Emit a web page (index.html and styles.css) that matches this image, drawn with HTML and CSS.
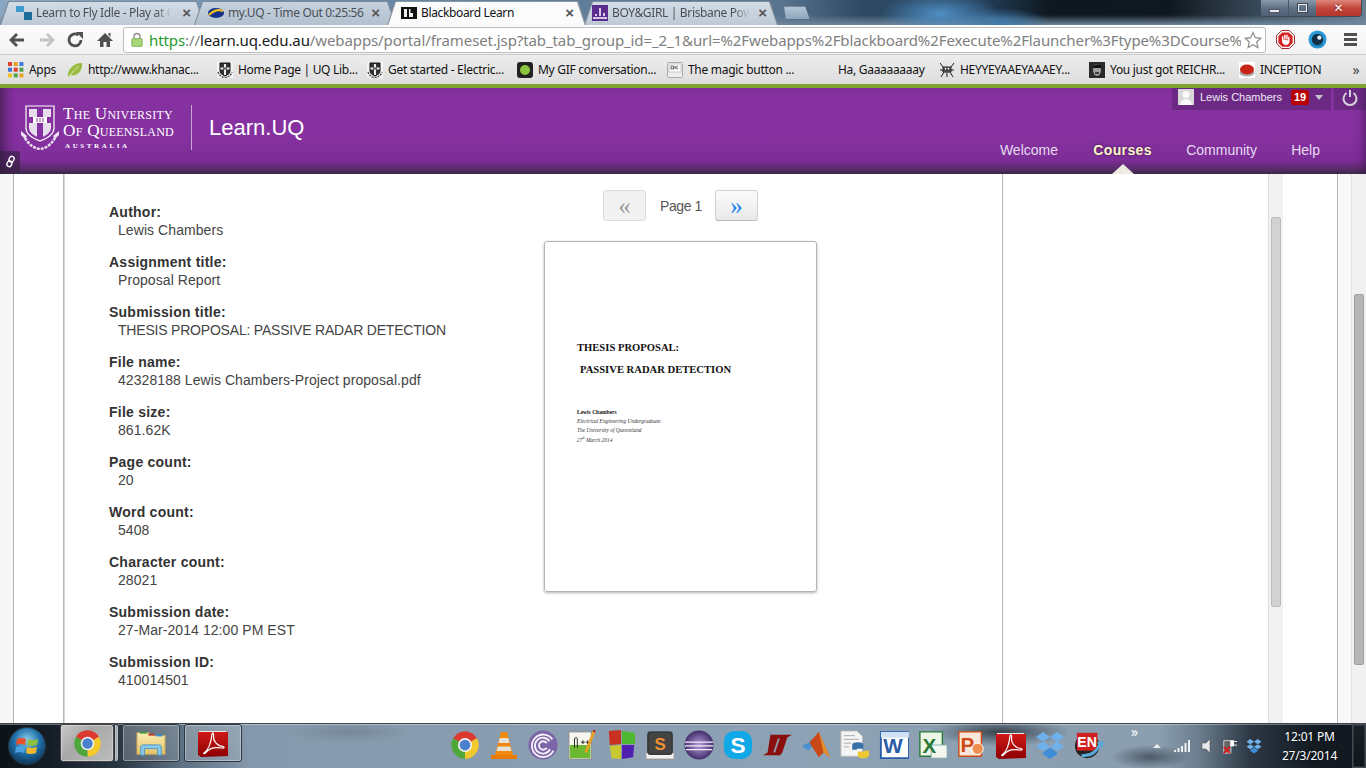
FILE: index.html
```html
<!DOCTYPE html>
<html lang="en">
<head>
<meta charset="utf-8">
<title>Blackboard Learn</title>
<link rel="stylesheet" href="styles.css">
</head>
<body>
<svg class="defs" width="0" height="0" aria-hidden="true">
  <defs>
    <linearGradient id="acro" x1="0" y1="0" x2="0" y2="1"><stop offset="0" stop-color="#d01818"/><stop offset="1" stop-color="#8c0000"/></linearGradient>
    <radialGradient id="orb" cx=".5" cy=".35" r=".7"><stop offset="0" stop-color="#8fd0f0"/><stop offset=".5" stop-color="#1f6fa8"/><stop offset="1" stop-color="#0a2c4c"/></radialGradient>
    <radialGradient id="eclipse" cx=".5" cy=".5" r=".6"><stop offset="0" stop-color="#b79bd8"/><stop offset="1" stop-color="#2c1a58"/></radialGradient>
    <linearGradient id="folder" x1="0" y1="0" x2="0" y2="1"><stop offset="0" stop-color="#fbeeb4"/><stop offset="1" stop-color="#e3c266"/></linearGradient>
    <symbol id="chrome" viewBox="0 0 24 24">
      <path d="M2.500 6.500A11 11 0 0 1 21.500 6.500L12 12Z" fill="#dc3a2e"/>
      <path d="M21.500 6.500A11 11 0 0 1 12 23L12 12Z" fill="#f4c92c"/>
      <path d="M12 23A11 11 0 0 1 2.500 6.500L12 12Z" fill="#4fa63a"/>
      <circle cx="12" cy="12" r="5.600" fill="#f2f2f2"/><circle cx="12" cy="12" r="4.300" fill="#4a80cc"/>
    </symbol>
    <symbol id="acrobat" viewBox="0 0 30 30">
      <path d="M1 3H28V28H1Z" fill="#f0e8e8"/><path d="M0 4H30V28L3 29 0 27Z" fill="url(#acro)"/>
      <path d="M6 25C10 22 13 16 14 6C14.500 4 16 5 15.500 8C15 13 19 18 25 18.500C27 19 26 20.500 24 20C18 19 11 20 8 24.500C7 26 5 26 6 25Z" fill="none" stroke="#fff" stroke-width="1.200"/>
    </symbol>
    <symbol id="crest" viewBox="0 0 16 16">
      <path d="M0 0H16V16H0Z" fill="#f4f4f4"/>
      <path d="M3 1H13V9Q13 12 8 14Q3 12 3 9Z" fill="#333" stroke="#111"/>
      <path d="M8 2V13M3.500 6.500H12.500" stroke="#eee" stroke-width="2"/>
      <path d="M6 5.500H10V7.500H6Z" fill="#555"/>
      <path d="M1 10Q3 15 8 15.500Q13 15 15 10" fill="none" stroke="#444" stroke-width="1.400" stroke-dasharray="2 1"/>
    </symbol>
    <symbol id="dropbox" viewBox="0 0 32 30">
      <path d="M8.500 1 16 6.500 8.500 11.500 1 6.500ZM23.500 1 31 6.500 23.500 11.500 16 6.500ZM8.500 11.500 16 16.500 8.500 21.500 1 16.500ZM23.500 11.500 31 16.500 23.500 21.500 16 16.500Z" fill="#6fb1ea"/>
      <path d="M8.500 23 16 18 23.500 23V25L16 30 8.500 25Z" fill="#3d8dd8"/>
    </symbol>
  </defs>
</svg>

<div class="tabstrip">
  <div class="tab tab-one">
    <svg class="fav" viewBox="0 0 16 16"><path d="M0 1H8V7H0Z" fill="#3d9bd0"/><path d="M8 7H16V15H8Z" fill="#1c6c9c"/></svg>
    <span class="tab-title">Learn to Fly Idle - Play at C</span><span class="tab-x">×</span>
  </div>
  <div class="tab tab-two">
    <svg class="fav" viewBox="0 0 16 16"><ellipse cx="8" cy="8" rx="8" ry="5" fill="#17308c"/><path d="M1 10Q8 3 15 6" stroke="#f0c020" stroke-width="2.200" fill="none"/></svg>
    <span class="tab-title">my.UQ - Time Out 0:25:56</span><span class="tab-x">×</span>
  </div>
  <div class="tab tab-three">
    <svg class="fav" viewBox="0 0 16 16"><path d="M0 2H16V14H0Z" fill="#111"/><path d="M3 4V12H6V4ZM8 4V12H12V8H9.500V4Z" fill="#eee"/></svg>
    <span class="tab-title">Blackboard Learn</span><span class="tab-x">×</span>
  </div>
  <div class="tab tab-four">
    <svg class="fav" viewBox="0 0 16 16"><path d="M0 0H16V16H0Z" fill="#5c2d8e"/><path d="M7 3H9V11H7ZM3 9H5V11H3ZM11 8H13V11H11ZM1 12H15V14H1Z" fill="#d8c8e8"/></svg>
    <span class="tab-title">BOY&amp;GIRL | Brisbane Pow</span><span class="tab-x">×</span>
  </div>
  <div class="newtab"></div>
  <div class="winctl">
    <div class="win win-min"><span class="min-bar"></span></div>
    <div class="win win-max"><span class="max-box"></span></div>
    <div class="win win-close">✕</div>
  </div>
</div>

<div class="toolbar">
  <svg class="tool tool-back" viewBox="0 0 18 18"><path d="M16 9H4M9 3 3 9 9 15" fill="none" stroke="#505050" stroke-width="2.800"/></svg>
  <svg class="tool tool-fwd" viewBox="0 0 18 18"><path d="M2 9H14M9 3 15 9 9 15" fill="none" stroke="#c4c4c4" stroke-width="2.800"/></svg>
  <svg class="tool tool-reload" viewBox="0 0 18 18"><path d="M15 9A6 6 0 1 1 12.500 4" fill="none" stroke="#505050" stroke-width="2.800"/><path d="M10 1 17 1 17 8Z" fill="#505050"/></svg>
  <svg class="tool tool-home" viewBox="0 0 18 18"><path d="M9 2 17 10H14V16H10.500V11H7.500V16H4V10H1Z" fill="#505050"/><path d="M12.500 2H14.500V6L12.500 4Z" fill="#505050"/></svg>
  <div class="omnibox">
    <svg class="lock" viewBox="0 0 14 16"><path d="M3.500 7V4.500A3.500 3.500 0 0 1 10.500 4.500V7" fill="none" stroke="#8a8a8a" stroke-width="1.500"/><rect x="1" y="7" width="12" height="9" rx="1" fill="#a8d878" stroke="#76a84c"/></svg>
    <div class="url"><span class="u-green">https</span><span class="u-gray">://</span><span class="u-dark">learn.uq.edu.au</span><span class="u-gray">/webapps/portal/frameset.jsp?tab_tab_group_id=_2_1&amp;url=%2Fwebapps%2Fblackboard%2Fexecute%2Flauncher%3Ftype%3DCourse%</span></div>
    <svg class="star" viewBox="0 0 18 18"><path d="M9 1.500 11.300 6.700 16.800 7.300 12.700 11 13.900 16.500 9 13.700 4.100 16.500 5.300 11 1.200 7.300 6.700 6.700Z" fill="#fff" stroke="#8c8c8c" stroke-width="1.200"/></svg>
  </div>
  <svg class="ext ext-stop" viewBox="0 0 20 20"><path d="M6 .5H14L19.500 6V14L14 19.500H6L.5 14V6Z" fill="#fff" stroke="#9a1c1c"/><path d="M6.500 2.500H13.500L17.500 6.500V13.500L13.500 17.500H6.500L2.500 13.500V6.500Z" fill="#d42020"/><path d="M7 10V6.500M9.300 10V5M11.500 10V5M13.500 11V7M7 10Q7 15 10 15Q13.500 15 13.500 11" fill="#fff" stroke="#fff" stroke-width="1.500"/></svg>
  <svg class="ext ext-eye" viewBox="0 0 20 20"><circle cx="10" cy="10" r="9.500" fill="#2b9ad6"/><circle cx="10" cy="10" r="6" fill="#123048"/><circle cx="12" cy="8" r="2.300" fill="#e8f4fa"/><path d="M4 15Q10 19 16 15" stroke="#0b6ea8" fill="none"/></svg>
  <div class="burger"><span></span><span></span><span></span></div>
</div>

<div class="bookmarks">
  <div class="bm"><svg class="bm-ico" viewBox="0 0 14 14"><path d="M0 0H3.500V3.500H0Z" fill="#e04030"/><path d="M5 0H8.500V3.500H5Z" fill="#e8a020"/><path d="M10 0H13.500V3.500H10Z" fill="#3c78d8"/><path d="M0 5H3.500V8.500H0Z" fill="#3c78d8"/><path d="M5 5H8.500V8.500H5Z" fill="#e04030"/><path d="M10 5H13.500V8.500H10Z" fill="#50a050"/><path d="M0 10H3.500V13.500H0Z" fill="#f0c020"/><path d="M5 10H8.500V13.500H5Z" fill="#50a050"/><path d="M10 10H13.500V13.500H10Z" fill="#e8a020"/></svg><span>Apps</span></div>
  <div class="bm"><svg class="bm-ico" viewBox="0 0 16 16"><path d="M1 15C0 8 6 1 15 1C16 9 10 15 3 13Z" fill="#9abb44"/><path d="M2 15Q6 8 12 4" stroke="#d8e8a8" fill="none"/></svg><span>http://www.khanac...</span></div>
  <div class="bm"><svg class="bm-ico"><use href="#crest"/></svg><span>Home Page | UQ Lib...</span></div>
  <div class="bm"><svg class="bm-ico"><use href="#crest"/></svg><span>Get started - Electric...</span></div>
  <div class="bm"><svg class="bm-ico" viewBox="0 0 16 16"><rect width="16" height="16" rx="3" fill="#222"/><circle cx="8" cy="8" r="5" fill="#8cc63e"/></svg><span>My GIF conversation...</span></div>
  <div class="bm"><svg class="bm-ico" viewBox="0 0 16 16"><rect x=".5" y=".5" width="15" height="15" rx="1" fill="#eee" stroke="#aaa"/><rect x="2" y="2" width="12" height="8" fill="#fafafa" stroke="#ccc"/><path d="M4 4H6.500V7H4ZM8 4V7M11 4 8 5.500 11 7" fill="none" stroke="#666"/></svg><span>The magic button ...</span></div>
  <div class="bm bm-blank"><span>Ha, Gaaaaaaaay</span></div>
  <div class="bm"><svg class="bm-ico" viewBox="0 0 16 16"><path d="M4 5H12V10H4ZM1 1 4 5M15 1 12 5M2 15 5 10M14 15 11 10M8 10V15M1 8H15" fill="#777" stroke="#222"/><path d="M6 6H7V7.500H6ZM9 6H10V7.500H9Z" fill="#fff"/></svg><span>HEYYEYAAEYAAAEY...</span></div>
  <div class="bm"><svg class="bm-ico" viewBox="0 0 16 16"><path d="M0 0H16V16H0Z" fill="#2a2a2a"/><ellipse cx="8" cy="8" rx="4" ry="6" fill="#a0a0a0"/><path d="M4 5Q8 0 12 4V6H4Z" fill="#111"/><path d="M6 11H10" stroke="#222" stroke-width="1.500"/></svg><span>You just got REICHR...</span></div>
  <div class="bm"><svg class="bm-ico" viewBox="0 0 16 16"><path d="M0 0H16V16H0Z" fill="#fff"/><ellipse cx="8" cy="11" rx="7.500" ry="3.500" fill="#aaa"/><ellipse cx="8" cy="7.500" rx="7" ry="5" fill="#c82418"/></svg><span>INCEPTION</span></div>
  <div class="bm-more">»</div>
</div>
<div class="greenline"></div>

<header class="lms-head">
  <div class="logo">
    <svg class="uq-crest" viewBox="0 0 38 45">
      <path d="M5 1H33V23Q33 31 19 36Q5 31 5 23Z" fill="none" stroke="#fff" stroke-width="1.200"/>
      <path d="M8 4H30V23Q30 29 19 33Q8 29 8 23Z" fill="#e8dcef"/>
      <path d="M16 4H22V12H30V18H22V33H16V18H8V12H16Z" fill="#8531a0"/>
      <path d="M12 12H26V18H12Z" fill="#fff"/><path d="M16 13V17M19 13V17M22 13V17" stroke="#8531a0"/>
      <path d="M0 26 6 31 4 34 0 30ZM38 26 32 31 34 34 38 30Z" fill="#f0e4f4"/>
      <path d="M4 33Q10 43 19 44Q28 43 34 33" fill="none" stroke="#e8dcef" stroke-width="2.500" stroke-dasharray="3 1"/>
    </svg>
    <div class="uq-name">
      <div class="uq-line">The University</div>
      <div class="uq-line">Of Queensland</div>
      <div class="uq-sub">AUSTRALIA</div>
    </div>
    <div class="logo-div"></div>
    <div class="learn">Learn.UQ</div>
  </div>
  <div class="head-right">
    <div class="userbar">
      <div class="userpill">
        <svg class="avatar" viewBox="0 0 16 16"><path d="M0 0H16V16H0Z" fill="#d8d8d8"/><circle cx="8" cy="5.500" r="3.500" fill="#fafafa"/><path d="M2 16Q3 10 8 10Q13 10 14 16Z" fill="#fafafa"/></svg>
        <span class="username">Lewis Chambers</span>
        <span class="badge">19</span>
        <span class="caret"></span>
      </div>
      <div class="powerpill">
        <svg class="power" viewBox="0 0 16 17"><path d="M4.500 4A6.500 6.500 0 1 0 11.500 4" fill="none" stroke="#d8d2dc" stroke-width="2"/><path d="M8 1V8" stroke="#d8d2dc" stroke-width="2"/></svg>
      </div>
    </div>
    <nav class="nav">
      <span class="nav-item nav-welcome">Welcome</span>
      <span class="nav-item nav-courses">Courses</span>
      <span class="nav-item nav-community">Community</span>
      <span class="nav-item nav-help">Help</span>
    </nav>
  </div>
  <div class="linktab">
    <svg viewBox="0 0 12 14" class="linkico"><g fill="none" stroke="#fff" stroke-width="1.500" transform="rotate(25 6 7)"><rect x="3.500" y="1" width="5" height="6.500" rx="2.500"/><rect x="3.500" y="6.500" width="5" height="6.500" rx="2.500"/></g></svg>
  </div>
</header>

<main class="viewport">
  <div class="gut-left"></div>
  <div class="gut-white"></div>
  <section class="paper">
    <dl class="fields">
      <div class="field"><dt>Author:</dt><dd>Lewis Chambers</dd></div>
      <div class="field"><dt>Assignment title:</dt><dd>Proposal Report</dd></div>
      <div class="field"><dt>Submission title:</dt><dd class="caps">THESIS PROPOSAL: PASSIVE RADAR DETECTION</dd></div>
      <div class="field"><dt>File name:</dt><dd>42328188 Lewis Chambers-Project proposal.pdf</dd></div>
      <div class="field"><dt>File size:</dt><dd>861.62K</dd></div>
      <div class="field"><dt>Page count:</dt><dd>20</dd></div>
      <div class="field"><dt>Word count:</dt><dd>5408</dd></div>
      <div class="field"><dt>Character count:</dt><dd>28021</dd></div>
      <div class="field"><dt>Submission date:</dt><dd>27-Mar-2014 12:00 PM EST</dd></div>
      <div class="field"><dt>Submission ID:</dt><dd>410014501</dd></div>
    </dl>
    <div class="viewer">
      <div class="pager">
        <button class="pg-btn pg-prev">«</button>
        <span class="pg-label">Page 1</span>
        <button class="pg-btn pg-next">»</button>
      </div>
      <div class="preview">
        <div class="doc-title">THESIS PROPOSAL:</div>
        <div class="doc-title doc-title-2">PASSIVE RADAR DETECTION</div>
        <div class="doc-author">Lewis Chambers</div>
        <div class="doc-meta">Electrical Engineering Undergraduate</div>
        <div class="doc-meta">The University of Queensland</div>
        <div class="doc-meta">27<sup>th</sup> March 2014</div>
      </div>
    </div>
  </section>
  <div class="side-white"></div>
  <div class="inner-scroll"><div class="inner-thumb"></div></div>
  <div class="gut-right"></div>
  <div class="gut-pale"></div>
  <div class="outer-scroll"><div class="outer-thumb"></div></div>
</main>

<footer class="taskbar">
  <svg class="orb" viewBox="0 0 38 38">
    <circle cx="19" cy="19" r="18.500" fill="url(#orb)" stroke="#2a3a48"/>
    <path d="M9 12Q13 10 18 12L17 18Q13 16 8 18Z" fill="#e8502c"/>
    <path d="M20 12Q25 14 30 12L29 18Q24 20 19 18Z" fill="#8cc040"/>
    <path d="M8 20Q13 18 17 20L16 26Q12 24 7 26Z" fill="#4aa0e0"/>
    <path d="M19 20Q24 22 29 20L28 26Q23 28 18 26Z" fill="#f0b828"/>
  </svg>
  <div class="tb-btn tb-active"><svg class="tb-ico"><use href="#chrome"/></svg></div>
  <div class="tb-sliver"></div>
  <div class="tb-btn">
    <svg class="tb-ico" viewBox="0 0 32 30"><path d="M1 4H14L15 7H31V27H1Z" fill="url(#folder)" stroke="#c8a858"/><path d="M4 3H12V5H4Z" fill="#40a040"/><path d="M13 5H20V7H13Z" fill="#c04030"/><path d="M21 6H28V8H21Z" fill="#3090d8"/><path d="M5 28V19Q5 17 8 17H24Q27 17 27 19V28H23V21H9V28Z" fill="#8cc8e8" stroke="#4a98c8"/></svg>
  </div>
  <div class="tb-btn tb-third"><svg class="tb-ico"><use href="#acrobat"/></svg></div>
  <div class="quick">
    <svg class="ql"><use href="#chrome"/></svg>
    <svg class="ql" viewBox="0 0 28 30"><path d="M11 2H17L23 25H5Z" fill="#f08a10"/><path d="M9.800 8H18.200L19.500 13H8.500ZM7.800 16.500H20.200L21.500 21H6.500Z" fill="#e4e0d8"/><path d="M1 25H27V29H1Z" fill="#e87a08"/></svg>
    <svg class="ql" viewBox="0 0 32 32"><circle cx="16" cy="16" r="15.500" fill="#7b64a8"/><path d="M26 10A12 12 0 1 0 27 22M23 12A8.500 8.500 0 1 0 23.500 20.500M20 14A4.500 4.500 0 1 0 20 19" fill="none" stroke="#f4f0f8" stroke-width="2"/></svg>
    <svg class="ql" viewBox="0 0 30 32"><path d="M1 2H25V31H1Z" fill="#f6f6ee" stroke="#888"/><path d="M2 16H24V30H2Z" fill="#6cb830"/><path d="M7 19V9Q9 7 10 9V19M14 13H18M16 11V15M19 13H23M21 11V15" fill="none" stroke="#222"/><path d="M28 1 19 24" stroke="#e8a020" stroke-width="3"/><path d="M27 0 29 2" stroke="#b02020" stroke-width="2"/></svg>
    <svg class="ql" viewBox="0 0 30 32"><path d="M2 1 15 0V15L3 16Z" fill="#c83020"/><path d="M16 1 30 3V15L16 15Z" fill="#50b830"/><path d="M3 17 15 16V31L5 30Z" fill="#c8c830"/><path d="M16 16 29 16 28 29 16 31Z" fill="#5020b0"/></svg>
    <svg class="ql" viewBox="0 0 32 32"><path d="M1 24H31V30Q31 31 30 31H2Q1 31 1 30Z" fill="#f2f2f2" stroke="#999"/><rect x="3" y="2" width="26" height="24" rx="2" fill="#444" stroke="#222"/><text x="16" y="21" class="svg-s">S</text></svg>
    <svg class="ql" viewBox="0 0 32 32"><circle cx="16" cy="16" r="15.500" fill="url(#eclipse)"/><path d="M1 13H31M1 17H31M2 21H30" stroke="#f4ecfa" stroke-width="1.300"/></svg>
    <svg class="ql" viewBox="0 0 32 32"><rect x="1" y="1" width="30" height="30" rx="11" fill="#11a8e8"/><text x="16" y="25" class="svg-skype">S</text></svg>
    <svg class="ql" viewBox="0 0 32 26"><path d="M9 2H32L27 5 22 20Q20 25 16 24H1L6 21 8 8ZM17 6 12 21H14L19 6Z" fill="#8a0e0e"/></svg>
    <svg class="ql" viewBox="0 0 32 30"><path d="M1 16 9 12 13 15 8 21Z" fill="#4a90d0"/><path d="M9 12 19 1 25 15 31 28 24 23 19 28 12 17Z" fill="#c84818"/><path d="M19 1 25 15 31 28 24 23Z" fill="#e89028"/></svg>
    <svg class="ql" viewBox="0 0 32 32"><path d="M1 1H18L24 7V28H1Z" fill="#f4f4f4" stroke="#bbb"/><path d="M4 6H16M4 10H20M4 14H12M4 18H10" stroke="#aaa"/><path d="M13 20V16Q13 13 19 13Q25 13 25 16V20H18V21H13Z" fill="#3a70a8"/><path d="M31 20V26Q31 30 24 30Q19 30 19 26V23H26V22H31Z" fill="#f0c830"/></svg>
    <svg class="ql" viewBox="0 0 32 32"><path d="M2 2H32V30H2Z" fill="#fff" stroke="#2a5ca8" stroke-width="2"/><path d="M2 2H32V8H2Z" fill="#cfe0f4"/><text x="15" y="25" class="svg-office svg-w">W</text></svg>
    <svg class="ql" viewBox="0 0 32 32"><path d="M2 2H26V28H2Z" fill="#eef6e8" stroke="#2a7a3a" stroke-width="1.500"/><path d="M14 16H31V30H14Z" fill="#f4f8f0" stroke="#8aa"/><text x="12" y="24" class="svg-office svg-x">X</text></svg>
    <svg class="ql" viewBox="0 0 32 32"><path d="M2 2H26V28H2Z" fill="#f8e6d8" stroke="#d04a18" stroke-width="1.500"/><circle cx="22" cy="20" r="6" fill="#f09050" stroke="#fff"/><text x="11" y="23" class="svg-office svg-p">P</text></svg>
    <svg class="ql"><use href="#acrobat"/></svg>
    <svg class="ql"><use href="#dropbox"/></svg>
    <svg class="ql" viewBox="0 0 32 32"><circle cx="14" cy="17" r="13" fill="#222"/><path d="M3 3H25V22H3Z" fill="#d02020"/><text x="14" y="18" class="svg-en">EN</text><path d="M8 27Q22 29 28 14" stroke="#5aa8d8" stroke-width="3" fill="none"/><path d="M24 13 32 12 30 20Z" fill="#5aa8d8"/></svg>
  </div>
  <div class="tb-chev">»</div>
  <div class="tray">
    <span class="tray-up"></span>
    <svg class="tray-ico tray-sig" viewBox="0 0 16 12"><path d="M0 10H2V12H0ZM3.500 8H5.500V12H3.500ZM7 6H9V12H7ZM10.500 3H12.500V12H10.500ZM14 0H16V12H14Z" fill="#f0f0f0"/></svg>
    <svg class="tray-ico tray-spk" viewBox="0 0 16 16"><path d="M1 5H5L9 1V15L5 11H1Z" fill="#e8eaec" stroke="#555" stroke-width=".6"/></svg>
    <svg class="tray-ico tray-pow" viewBox="0 0 16 18"><path d="M1 3H9V17H1Z" fill="#666" stroke="#ddd"/><path d="M10 4H16M10 8H16M9 3H12V9H9Z" stroke="#fff" fill="#fff"/><path d="M1 10 8 17M8 10 1 17" stroke="#e01818" stroke-width="2"/></svg>
    <svg class="tray-ico"><use href="#dropbox"/></svg>
  </div>
  <div class="clock"><div>12:01 PM</div><div>27/3/2014</div></div>
  <div class="showdesk"></div>
</footer>
</body>
</html>
```

FILE: styles.css
```css
* { box-sizing: border-box; }
html, body { margin: 0; padding: 0; }
body {
  width: 1366px; height: 768px; overflow: hidden;
  display: flex; flex-direction: column;
  font-family: "Liberation Sans", Arial, sans-serif;
  background: #fff;
}
.defs { position: absolute; }

/* tab strip */
.tabstrip {
  height: 25px; flex: none; display: flex; position: relative; padding-top: 1px;
  background:
    radial-gradient(60px 22px at 940px 14px, #4f8fc4 0, transparent 100%),
    radial-gradient(50px 14px at 1000px 22px, #3f7aa8 0, transparent 100%),
    linear-gradient(180deg, transparent 60%, #6f869c 100%),
    linear-gradient(90deg, #8aa6c0 0, #6a8cab 300px, #58748f 780px, #2e4a64 860px, #24405a 980px, #0e1820 1050px, #10181f 1170px, #3a4a5a 1260px, #6a7e92 1366px);
}
.tab {
  position: relative; flex: none; height: 24px; display: flex; align-items: center;
  font: 12px/16px "Noto Sans", sans-serif; letter-spacing: -.35px; color: #4a4f55;
  clip-path: polygon(8px 0, calc(100% - 8px) 0, 100% 100%, 0 100%);
  background: #7c8b9b;
}
.tab::before {
  content: ""; position: absolute; inset: 1px 0 0 0;
  clip-path: polygon(9px 0, calc(100% - 9px) 0, calc(100% - 1px) 100%, 1px 100%);
  background: linear-gradient(180deg, #d3dce6 0, #bdc9d6 100%);
}
.tab > * { position: relative; }
.tab-one { width: 205px; padding-left: 16px; z-index: 1; }
.tab-two { width: 202px; margin-left: -11px; padding-left: 14px; z-index: 2; }
.tab-two::before { background: linear-gradient(180deg, #c6d1dd 0, #b3c0cf 100%); }
.tab-three { width: 199px; margin-left: -9px; padding-left: 14px; z-index: 4; color: #111; background: #8e98a3; }
.tab-three::before { inset: 1px 0 -1px 0; background: #fbfbfb; }
.tab-four { width: 194px; margin-left: -2px; padding-left: 8px; z-index: 3; }
.fav { width: 16px; height: 16px; flex: none; margin-right: 4px; }
.tab-title {
  flex: none; width: 136px; overflow: hidden; white-space: nowrap;
  -webkit-mask-image: linear-gradient(90deg, #000 88%, transparent 100%);
          mask-image: linear-gradient(90deg, #000 88%, transparent 100%);
}
.tab-two .tab-title { width: 140px; -webkit-mask-image: none; mask-image: none; }
.tab-three .tab-title { -webkit-mask-image: none; mask-image: none; width: 140px; }
.tab-four .tab-title { width: 138px; }
.tab-x { flex: none; margin-left: auto; margin-right: 14px; font: bold 15px/16px "Liberation Sans", sans-serif; letter-spacing: 0; color: #555; }
.tab-two .tab-x { margin-right: 16px; }
.tab-three .tab-x { margin-right: 12px; }
.tab-four .tab-x { margin-right: 11px; }
.newtab {
  flex: none; width: 29px; height: 14px; margin: 5px 0 0 3px;
  background: linear-gradient(180deg, #b4c4d4 0, #8ea6bc 100%);
  border: 1px solid #71879c; border-bottom-color: #5a7086;
  clip-path: polygon(3px 0, calc(100% - 5px) 0, 100% 100%, 5px 100%);
}
.winctl {
  position: absolute; right: 4px; top: 0; width: 102px; height: 17px; display: flex;
  border: 1px solid #3e4a56; border-top: 0; border-radius: 0 0 4px 4px; overflow: hidden;
  box-shadow: inset 0 0 0 1px rgba(255,255,255,.4);
}
.win { display: flex; align-items: center; justify-content: center; color: #fff; }
.win-min { width: 28px; background: linear-gradient(180deg, #8b9bad 0, #5f7185 50%, #4f6074 100%); border-right: 1px solid #4a5866; }
.win-max { width: 27px; background: linear-gradient(180deg, #8b9bad 0, #5f7185 50%, #4f6074 100%); }
.win-close { flex: 1; background: linear-gradient(180deg, #e0887c 0, #c2473a 50%, #b5332a 100%); font: bold 12px/14px "DejaVu Sans", sans-serif; text-shadow: 0 0 2px #600; }
.min-bar { width: 11px; height: 4px; margin-top: 6px; background: #e8ecf0; border: 1px solid #556; }
.max-box { width: 11px; height: 10px; border: 2px solid #e8ecf0; outline: 1px solid #445; outline-offset: -1px; }

/* toolbar */
.toolbar {
  height: 30px; flex: none; display: flex; align-items: center; padding-left: 8px;
  background: linear-gradient(180deg, #fbfbfb 0, #f3f3f3 100%); border-bottom: 1px solid #c8c8c8;
}
.tool { width: 18px; height: 18px; flex: none; }
.tool-fwd { margin-left: 12px; }
.tool-reload { margin-left: 10px; }
.tool-home { margin-left: 12px; }
.omnibox {
  flex: none; width: 1143px; height: 26px; margin-left: 9px; padding: 0 5px 0 7px;
  display: flex; align-items: center; background: #fff;
  border: 1px solid #bdbdbd; border-radius: 3px;
}
.lock { width: 12px; height: 15px; flex: none; margin-right: 6px; }
.url { flex: none; width: 1092px; overflow: hidden; white-space: nowrap; font: 15px/20px "Noto Sans", sans-serif; letter-spacing: -.1px; }
.u-green { color: #1f9a2e; }
.u-gray { color: #808080; }
.u-dark { color: #202020; }
.star { width: 18px; height: 18px; flex: none; margin-left: 3px; }
.ext { width: 19px; height: 19px; flex: none; }
.ext-stop { margin-left: 10px; }
.ext-eye { margin-left: 13px; }
.burger { margin-left: 17px; width: 13px; display: flex; flex-direction: column; gap: 2px; }
.burger span { height: 3px; background: #505050; }

/* bookmarks */
.bookmarks {
  height: 29px; flex: none; display: grid; align-items: center; padding-left: 8px;
  grid-template-columns: 59px 150px 150px 150px 150px 151px 121px 150px 150px 107px 20px;
  background: linear-gradient(180deg, #ececec 0, #dedede 100%);
  font: 12px/16px "Noto Sans", sans-serif; letter-spacing: -.3px; color: #111;
}
.bm { display: flex; align-items: center; white-space: nowrap; overflow: hidden; }
.bm-ico { width: 16px; height: 16px; flex: none; margin-right: 5px; }
.bm-blank { padding-left: 20px; }
.bm-more { font: 14px/16px "Noto Sans", sans-serif; color: #444; text-align: center; }
.greenline { height: 4px; flex: none; background: #80a330; }

/* LMS header */
.lms-head {
  height: 86px; flex: none; position: relative; display: flex; justify-content: space-between;
  background: linear-gradient(180deg, #8531a0 0, #8531a0 50px, #7d2d97 72px, #5f2b72 80px, #3e2b4a 86px);
  box-shadow: inset 14px 0 12px -10px rgba(40,20,50,.7), inset -10px 0 10px -8px rgba(40,20,50,.5);
  z-index: 5;
}
.logo { display: flex; align-items: flex-start; padding: 17px 0 0 21px; }
.uq-crest { width: 38px; height: 45px; flex: none; }
.uq-name { margin-left: 4px; color: #fff; font-family: "Liberation Serif", serif; width: 128px; }
.uq-line { font-size: 17.200px; line-height: 17px; letter-spacing: .25px; font-variant: small-caps; white-space: nowrap; }
.uq-sub { font: bold 7px/8px "Liberation Serif", serif; letter-spacing: 2.600px; margin: 3px 0 0 2px; }
.logo-div { width: 1px; height: 45px; background: #c9a6d6; flex: none; }
.learn { margin: 9px 0 0 17px; font-size: 22px; line-height: 28px; color: #fff; }
.head-right { display: flex; flex-direction: column; }
.userbar { display: flex; height: 22px; gap: 3px; }
.userpill { width: 159px; height: 22px; display: flex; align-items: flex-start; padding: 1px 0 0 6px; background: rgba(60,30,80,.35); }
.powerpill { width: 32px; height: 22px; display: flex; align-items: flex-start; padding: 1px 0 0 8px; background: rgba(60,30,80,.35); }
.avatar { width: 16px; height: 16px; flex: none; margin-right: 6px; }
.username { font-size: 11px; line-height: 16px; color: #f0e8f4; width: 91px; flex: none; white-space: nowrap; }
.badge { width: 18px; height: 15px; margin-top: 1px; flex: none; background: #b80000; border-radius: 2px; color: #fff; font: bold 11px/15px "Liberation Sans", sans-serif; text-align: center; }
.caret { width: 0; height: 0; margin: 6px 0 0 6px; border: 4px solid transparent; border-top: 5px solid #c9c2cf; border-bottom: 0; }
.power { width: 16px; height: 17px; }
.nav { position: relative; display: block; margin-top: 30px; height: 34px; }
.nav-item { position: absolute; top: 0; font-size: 14px; line-height: 20px; color: #e6dcf0; white-space: nowrap; }
.nav-welcome { right: 308px; }
.nav-courses { right: 214px; font-weight: bold; letter-spacing: .4px; color: #fdf7c8; text-shadow: 0 0 3px #3c1a50; }
.nav-community { right: 109px; }
.nav-help { right: 46px; }
.nav-courses::after {
  content: ""; position: absolute; left: 19px; top: 24px; width: 0; height: 0;
  border: 11.500px solid transparent; border-bottom: 10px solid #efebe2; border-top: 0;
}
.linktab {
  position: absolute; left: 0; top: 63px; width: 20px; height: 21px; display: flex; align-items: center; justify-content: center;
  background: rgba(50,30,60,.6); border-radius: 0 3px 0 0;
}
.linkico { width: 11px; height: 13px; }

/* main content */
.viewport { flex: none; height: 549px; display: flex; background: #fff; overflow: hidden; }
.gut-left { width: 14px; flex: none; background: #f6f6f6; border-right: 1px solid #b4b4b4; }
.gut-white { width: 49px; flex: none; }
.paper {
  width: 940px; flex: none; display: flex; padding-left: 45px;
  border-left: 1px solid #b8b8b8; border-right: 1px solid #b8b8b8; box-shadow: inset 1px 0 0 #d8d8d8;
}
.fields { margin: 0; padding-top: 29px; width: 435px; flex: none; }
.field { margin-bottom: 14px; font-size: 14px; line-height: 18px; color: #444; }
.field dt { font-weight: bold; letter-spacing: .24px; color: #333; }
.field dd { margin: 0 0 0 9px; letter-spacing: .07px; white-space: nowrap; }
.field dd.caps { letter-spacing: -.2px; }
.viewer { width: 273px; flex: none; padding-top: 16px; }
.pager { display: flex; justify-content: center; align-items: center; gap: 14px; height: 31px; }
.pg-btn {
  width: 43px; height: 31px; padding: 0; border-radius: 3px; border: 1px solid #dcdcdc;
  font: 25px/26px "Liberation Serif", serif; background: #f1f1f1; color: #9a9a9a;
}
.pg-next { background: linear-gradient(180deg, #fbfbfb 0, #e9e9e9 100%); border-color: #d2d2d2; border-bottom-color: #b8b8b8; color: #1a80f0; }
.pg-label { font-size: 14px; letter-spacing: -.4px; line-height: 30px; color: #555; width: 41px; white-space: nowrap; }
.preview {
  margin-top: 20px; height: 351px; padding: 98px 0 0 32px;
  border: 1px solid #b4b4b4; border-radius: 3px; box-shadow: 0 1px 3px rgba(0,0,0,.3);
  font-family: "Liberation Serif", serif; color: #111;
}
.doc-title { font-size: 10.600px; font-weight: bold; line-height: 16px; white-space: nowrap; }
.doc-title-2 { margin: 6px 0 0 3px; }
.doc-author { margin-top: 30px; font-size: 5.500px; font-weight: bold; line-height: 9px; white-space: nowrap; }
.doc-meta { font-size: 5.400px; font-style: italic; line-height: 9.300px; white-space: nowrap; color: #333; }
.doc-meta sup { font-size: 3px; line-height: 0; }
.side-white { width: 265px; flex: none; }
.inner-scroll { width: 15px; flex: none; padding: 43px 0 0 2px; background: #f2f2f2; border-left: 1px solid #dedede; }
.inner-thumb { width: 10px; height: 390px; background: #d2d2d2; border: 1px solid #bcbcbc; border-radius: 2px; }
.gut-right { width: 55px; flex: none; border-right: 1px solid #b4b4b4; }
.gut-pale { width: 13px; flex: none; background: #f8f8f8; }
.outer-scroll { width: 15px; flex: none; padding: 120px 0 0 2px; background: #f1f1f1; border-left: 1px solid #e2e2e2; }
.outer-thumb { width: 10px; height: 371px; background: #b6b6b6; border: 1px solid #a0a0a0; border-radius: 2px; }

/* taskbar */
.taskbar {
  height: 45px; flex: none; position: relative; display: flex; align-items: flex-start;
  border-top: 1px solid #3c4650; box-shadow: inset 0 1px 0 rgba(255,255,255,.35);
  background:
    radial-gradient(60px 10px at 350px 8px, rgba(70,85,100,.28) 0, transparent 100%),
    radial-gradient(70px 14px at 1000px 8px, rgba(20,28,35,.7) 0, transparent 100%),
    radial-gradient(40px 12px at 1150px 33px, rgba(50,60,70,.7) 0, transparent 100%),
    linear-gradient(90deg, #0c1218 0, #151e27 50px, #2a3744 120px, #5d7082 180px, #8699ac 250px, #8ea2b5 800px, #8a9eb0 1160px, #6a7c8c 1200px, #2c3844 1250px, #141c24 1310px, #10171e 1366px);
}
.orb { width: 38px; height: 38px; flex: none; margin: 3px 14px 0 8px; }
.tb-btn {
  width: 58px; height: 38px; flex: none; margin-right: 4px; display: flex; align-items: center; justify-content: center;
  border: 1px solid #2c3640; border-radius: 3px; box-shadow: inset 0 0 0 1px rgba(255,255,255,.35);
  background: linear-gradient(135deg, rgba(255,255,255,.25) 0, rgba(255,255,255,.12) 100%);
}
.tb-active { width: 54px; margin-right: 0; background: linear-gradient(135deg, #c8c8c8 0, #a8a8a8 40%, #bcbcbc 100%); border-color: #444; }
.tb-sliver { width: 5px; height: 38px; flex: none; margin-right: 3px; background: #a0a8b0; border: 1px solid #2c3640; border-radius: 0 3px 3px 0; box-shadow: inset 0 0 0 1px rgba(255,255,255,.3); }
.tb-ico { width: 30px; height: 30px; }
.tb-active .tb-ico { width: 29px; height: 29px; }
.quick { display: flex; gap: 9px; margin: 6px 0 0 204px; flex: none; }
.ql { width: 30px; height: 30px; flex: none; }
.tb-chev { position: absolute; left: 1131px; top: 0; font: 14px/16px "Noto Sans", sans-serif; color: #fff; }
.tray { display: flex; align-items: center; flex: none; margin: 12px 0 0 49px; height: 20px; }
.tray-up { width: 0; height: 0; border: 4px solid transparent; border-bottom: 4px solid #f0f0f0; border-top: 0; margin-right: 13px; }
.tray-ico { width: 16px; height: 16px; flex: none; }
.tray-sig { margin-right: 11px; }
.tray-spk { margin-right: 5px; }
.tray-pow { margin-right: 8px; }
.clock {
  position: absolute; left: 1273px; top: 3px; width: 73px; text-align: center;
  font: 12px/19px "Noto Sans", sans-serif; letter-spacing: -.2px; color: #fff; text-shadow: 0 0 3px rgba(0,0,0,.5);
}
.showdesk { position: absolute; right: 0; top: 0; width: 14px; height: 44px; border: 1px solid #444c54; background: linear-gradient(180deg, #1a2026, #11161b); box-shadow: inset 0 0 0 1px rgba(255,255,255,.1); }

.svg-s { font: bold 18px "Liberation Sans", sans-serif; fill: #f09030; text-anchor: middle; }
.svg-skype { font: bold 24px "Liberation Sans", sans-serif; fill: #fff; text-anchor: middle; }
.svg-office { font: bold 22px "Liberation Sans", sans-serif; text-anchor: middle; }
.svg-w { fill: #2a5ca8; }
.svg-x { fill: #2a7a3a; }
.svg-p { fill: #d04a18; }
.svg-en { font: bold 15px "Liberation Sans", sans-serif; fill: #fff; text-anchor: middle; }
```
